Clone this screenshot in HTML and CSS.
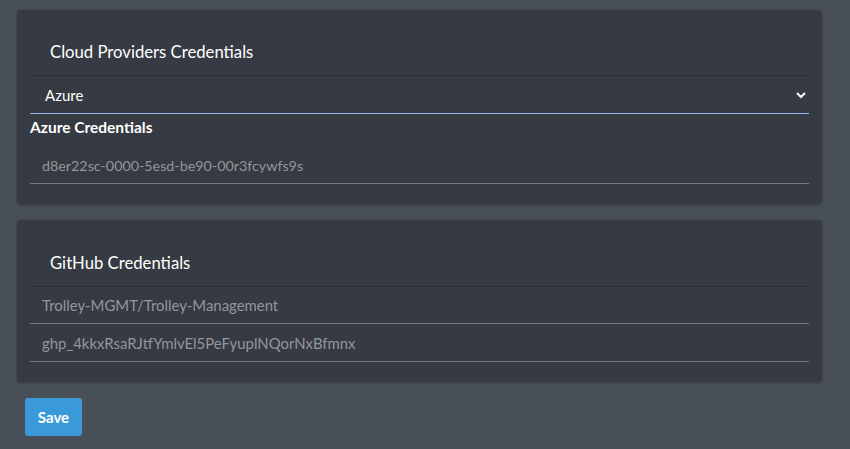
FILE: index.html
```html
<!DOCTYPE html>
<html>
<head>
<meta charset="utf-8">
<link rel="stylesheet" href="styles.css">
</head>
<body>
<div class="page">
  <section class="card">
    <h2 class="card-title">Cloud Providers Credentials</h2>
    <div class="select">
      <span class="select-value">Azure</span>
      <svg class="chevron" width="10" height="8" viewBox="0 0 10 8"><path d="M1 2 L5 6 L9 2" fill="none" stroke="#ffffff" stroke-width="2"/></svg>
    </div>
    <div class="label">Azure Credentials</div>
    <div class="input input-first">d8er22sc-0000-5esd-be90-00r3fcywfs9s</div>
  </section>
  <section class="card card-gh">
    <h2 class="card-title">GitHub Credentials</h2>
    <div class="input">Trolley-MGMT/Trolley-Management</div>
    <div class="input input-last">ghp_4kkxRsaRJtfYmlvEl5PeFyuplNQorNxBfmnx</div>
  </section>
  <div class="actions">
    <button class="btn">Save</button>
  </div>
</div>
</body>
</html>
```

FILE: styles.css
```css
html, body {
  margin: 0;
  padding: 0;
  height: 100%;
}
body {
  background: #484f57;
  font-family: Lato, "Liberation Sans", sans-serif;
  color: #ffffff;
}
.page {
  padding: 10px 28px 0 17px;
  display: flex;
  flex-direction: column;
}
.card {
  background: #363a42;
  border-radius: 4px;
  box-shadow: 0 1px 3px rgba(0,0,0,0.25);
  padding: 0 13px 20px 13px;
  display: flex;
  flex-direction: column;
}
.card-gh {
  margin-top: 16px;
}
.card-title {
  margin: 0;
  padding: 32px 20px 13px 20px;
  font-size: 16.7px;
  line-height: 20px;
  font-weight: 400;
  border-bottom: 1px solid #2c2f36;
}
.card-gh .card-title {
  padding-top: 33px;
}
.select {
  height: 37px;
  border-bottom: 1px solid #8ab6e8;
  display: flex;
  align-items: center;
  justify-content: space-between;
  padding: 0 3px 0 15px;
  font-size: 15px;
}
.chevron {
  display: block;
}
.label {
  font-weight: 700;
  font-size: 15.5px;
  line-height: 18px;
  padding-top: 4px;
}
.input {
  height: 36px;
  display: flex;
  align-items: center;
  padding-left: 12px;
  font-size: 14.3px;
  color: #93969b;
  border-bottom: 1px solid #75787e;
}
.card-gh .input {
  font-size: 14.9px;
}
.input-first {
  margin-top: 11px;
}
.input-last {
  height: 37px;
}
.actions {
  padding: 16px 0 0 8px;
}
.btn {
  background: #3a9ad9;
  color: #ffffff;
  border: none;
  border-radius: 3px;
  width: 57px;
  height: 38px;
  font-family: Lato, "Liberation Sans", sans-serif;
  font-weight: 700;
  font-size: 15px;
  padding: 0;
}
```
